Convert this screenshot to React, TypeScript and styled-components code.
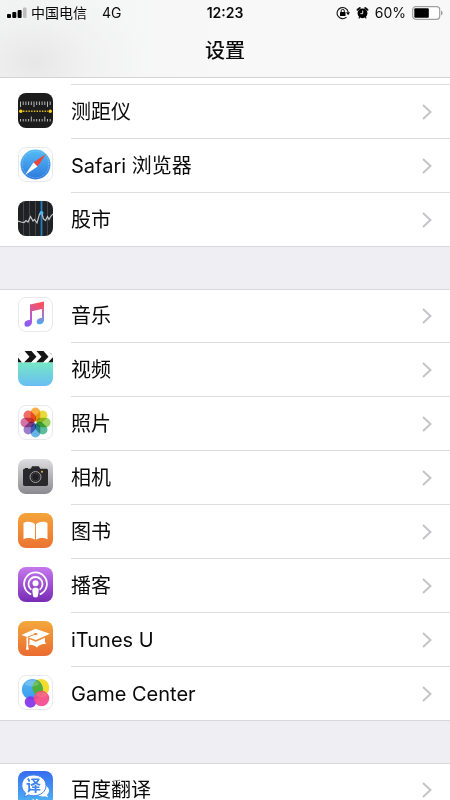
import React from "react";
import styled, { createGlobalStyle } from "styled-components";

const GlobalStyle = createGlobalStyle`
  *, *::before, *::after { box-sizing: border-box; }
  body {
    margin: 0;
    background: #efeef3;
    color: #0a0a0a;
    font-family: Inter, "Noto Sans CJK SC", sans-serif;
  }
`;

const Screen = styled.div`
  display: flex;
  flex-direction: column;
  height: 100vh;
  overflow: hidden;
`;

const Header = styled.header`
  flex: none;
  border-bottom: 1px solid #d3d3d5;
  background:
    radial-gradient(ellipse 110px 80px at 35px 62px, #e7e7e7, rgba(238, 238, 238, 0.5) 50%, rgba(244, 244, 244, 0)),
    linear-gradient(90deg, #f3f4f4, #f8f8f8 50%, #f8f8f8);
`;

const StatusBar = styled.div`
  display: grid;
  grid-template-columns: 1fr auto 1fr;
  align-items: center;
  height: 26px;
  padding: 0 7px;
  font-size: 14px;
  line-height: 20px;
`;

const StatusSide = styled.div<{ $end?: boolean }>`
  display: flex;
  align-items: center;
  justify-content: ${(p) => (p.$end ? "flex-end" : "flex-start")};
  gap: ${(p) => (p.$end ? "6px" : "4px")};
  white-space: nowrap;
`;

const Network = styled.span`
  margin-left: 11px;
`;

const Clock = styled.time`
  font-weight: 600;
`;

const Title = styled.h1`
  margin: 0;
  height: 51px;
  font-size: 20px;
  font-weight: 500;
  line-height: 51px;
  text-align: center;
`;

const Content = styled.main`
  flex: 1;
  min-height: 0;
  overflow-y: auto;
  scrollbar-width: none;
`;

const HiddenRowEdge = styled.div`
  height: 7px;
  padding-left: 71px;
  background: #fff;

  &::after {
    content: "";
    display: block;
    height: 100%;
    border-bottom: 1px solid #dedee0;
  }
`;

const Group = styled.ul<{ $continued?: boolean }>`
  margin: 0 0 42px;
  padding: 0;
  list-style: none;
  background: #fff;
  box-shadow: ${(p) => (p.$continued ? "" : "inset 0 1px #d9d9dc, ")}inset 0 -1px #d9d9dc;
`;

const RowLink = styled.a`
  display: flex;
  align-items: flex-start;
  gap: 18px;
  height: 54px;
  padding-left: 18px;
  color: inherit;
  text-decoration: none;
`;

const AppIcon = styled.svg`
  flex: none;
  width: 35px;
  height: 35px;
  margin-top: 8px;
`;

const RowBody = styled.span`
  display: flex;
  flex: 1;
  align-items: center;
  justify-content: space-between;
  height: 54px;
  padding-right: 17px;
  border-bottom: 1px solid #dedee0;

  li:last-child & {
    border-bottom-color: transparent;
  }
`;

const Label = styled.span`
  font-size: 20px;
  line-height: 28px;
`;

const Petal = styled.rect`
  mix-blend-mode: multiply;
`;

function Chevron() {
  return (
    <svg width="12" height="18" viewBox="0 0 12 18" fill="none" stroke="#c5c5c9" strokeWidth="2" aria-hidden="true">
      <path d="M2 2l7.5 7L2 16" />
    </svg>
  );
}

const plate = { x: 0.5, y: 0.5, width: 34, height: 34, rx: 7.5 };

function Measure() {
  const ticks = Array.from({ length: 12 }, (_, i) => i);
  return (
    <AppIcon viewBox="0 0 35 35" aria-hidden="true">
      <rect width="35" height="35" rx="8" fill="#1c1c1c" />
      <g stroke="#b9b9b9" strokeWidth="1">
        {ticks.map((i) => (
          <path
            key={i}
            d={`M${2.5 + i * 2.7} 8.500v${i % 5 === 0 ? 5.5 : 3.5}M${2.5 + i * 2.7} 28.500v-${i % 5 === 4 ? 5 : 2.5}`}
          />
        ))}
      </g>
      <path d="M5 18.300h25" stroke="#d9b41f" strokeWidth="1.400" strokeDasharray="1.500 1.200" />
      <circle cx="2.800" cy="18.300" r="1.700" fill="#ffd11f" />
      <circle cx="32.200" cy="18.300" r="1.700" fill="#ffd11f" />
    </AppIcon>
  );
}

function Safari() {
  return (
    <AppIcon viewBox="0 0 35 35" aria-hidden="true">
      <defs>
        <linearGradient id="safari" x2="0" y2="1">
          <stop stopColor="#56bdf5" />
          <stop offset="1" stopColor="#2d78dc" />
        </linearGradient>
      </defs>
      <rect {...plate} fill="#fff" stroke="#e9e9ed" />
      <circle cx="17.500" cy="17.500" r="15" fill="url(#safari)" />
      <circle cx="17.500" cy="17.500" r="13.300" fill="none" stroke="#a6d9fa" strokeWidth="1" strokeDasharray="0.500 1.200" />
      <path d="M28 7L19.500 19.500 15.500 15.500z" fill="#f04438" />
      <path d="M7 28l8.500-12.500 4 4z" fill="#fff" />
    </AppIcon>
  );
}

function Stocks() {
  return (
    <AppIcon viewBox="0 0 35 35" aria-hidden="true">
      <rect width="35" height="35" rx="8" fill="#202124" />
      <path d="M5.500 1v33M11.500 0v35M17.500 0v35M29.500 1v33" stroke="#44464a" />
      <path d="M23.500 0v35" stroke="#2281bd" strokeWidth="1.800" />
      <path
        d="M0 20l3 1 3 .5 2-2 2 1.500 2.500-5.500L15 20l1.500-1.500L19 22l2.500-9 2-1.500L25.500 18l2 1.500 2-4 1.500 3 2-3.500 2-2"
        fill="none"
        stroke="#c4c6c9"
        strokeWidth="1.200"
      />
      <circle cx="23.500" cy="12" r="2" fill="#4cb7f6" />
    </AppIcon>
  );
}

function Music() {
  return (
    <AppIcon viewBox="0 0 35 35" aria-hidden="true">
      <defs>
        <linearGradient id="music" x1="0" y1="1" x2="0.500" y2="0">
          <stop stopColor="#7a5cff" />
          <stop offset=".4" stopColor="#b05cd8" />
          <stop offset="1" stopColor="#f85261" />
        </linearGradient>
        <linearGradient id="musicStem" x2="0" y2="1">
          <stop stopColor="#ee596b" />
          <stop offset=".5" stopColor="#a777cb" />
          <stop offset="1" stopColor="#45aff4" />
        </linearGradient>
      </defs>
      <rect {...plate} fill="#fff" stroke="#e9e9ed" />
      <path d="M12 7.500L26 4.500v7l-12 2.700V25c0 3-2.500 4.700-4.900 4.700S6.500 28 6.500 26.500c0-2.300 2.200-3.300 5.500-3.700z" fill="url(#music)" />
      <path d="M24 9l2-.5V23c0 2.700-2.300 4.300-4.500 4.300s-2.800-1.500-2.800-2.900c0-2.200 2-3.200 5.300-3.600z" fill="url(#musicStem)" />
    </AppIcon>
  );
}

function Videos() {
  return (
    <AppIcon viewBox="0 0 35 35" aria-hidden="true">
      <defs>
        <linearGradient id="videos" x2="0" y2="1">
          <stop stopColor="#76e8c6" />
          <stop offset="1" stopColor="#68bdf4" />
        </linearGradient>
        <clipPath id="videoShape"><rect width="35" height="35" rx="8" /></clipPath>
      </defs>
      <g clipPath="url(#videoShape)">
        <rect width="35" height="12" fill="#fff" />
        <path d="M0 0h3.500L0 5zM0 6.500l4 5H0zM6.500 0h7l5 5.700-5.500 5.800H6l5.500-5.800zM18.500 0h7l5 5.700-5.500 5.800h-7l5.500-5.800zM30.500 0H35v5zM35 6v5.500h-5z" fill="#161616" />
        <rect y="11.500" width="35" height="23.500" fill="url(#videos)" />
      </g>
    </AppIcon>
  );
}

function Photos() {
  const colors = ["#f6a020", "#e7d51b", "#8acb42", "#40b18a", "#4aa4df", "#8b67c2", "#ca5c98", "#ed5548"];
  return (
    <AppIcon viewBox="0 0 35 35" aria-hidden="true">
      <rect {...plate} fill="#fff" stroke="#e9e9ed" />
      {colors.map((color, i) => (
        <Petal
          key={color}
          x="12.700"
          y="2.500"
          width="9.600"
          height="14"
          rx="4.800"
          fill={color}
          opacity="0.850"
          transform={`rotate(${i * 45} 17.500 17.500)`}
        />
      ))}
    </AppIcon>
  );
}

function Camera() {
  return (
    <AppIcon viewBox="0 0 35 35" aria-hidden="true">
      <defs>
        <linearGradient id="camera" x2="0" y2="1">
          <stop stopColor="#dedee0" />
          <stop offset="1" stopColor="#8a898f" />
        </linearGradient>
      </defs>
      <rect width="35" height="35" rx="8" fill="url(#camera)" />
      <path d="M7 9.700V9h3v.7h2.700l1.500-2.400h6.600l1.500 2.400h6c1 0 1.700.7 1.700 1.600v13.900c0 1-.7 1.700-1.700 1.700H6.700c-1 0-1.700-.7-1.700-1.700V11.300c0-.9.7-1.600 1.700-1.600z" fill="#29292c" />
      <circle cx="17.500" cy="18" r="5.500" fill="none" stroke="#9c9ca2" strokeWidth="1" />
      <circle cx="17.500" cy="18" r="3.800" fill="#202023" stroke="#3c3c41" />
      <circle cx="24" cy="12.800" r="1" fill="#f4b632" />
    </AppIcon>
  );
}

function Books() {
  return (
    <AppIcon viewBox="0 0 35 35" aria-hidden="true">
      <defs>
        <linearGradient id="books" x2="0" y2="1">
          <stop stopColor="#f4a43a" />
          <stop offset="1" stopColor="#ec7332" />
        </linearGradient>
      </defs>
      <rect width="35" height="35" rx="8" fill="url(#books)" />
      <path d="M17 11.300C15 8.500 8.500 7.900 5.500 10v16.200c3.300-1.700 9-1.500 11.500.6zM18 11.300c2-2.800 8.500-3.400 11.500-1.300v16.200c-3.300-1.700-9-1.500-11.500.6z" fill="#fff" />
    </AppIcon>
  );
}

function Podcasts() {
  return (
    <AppIcon viewBox="0 0 35 35" aria-hidden="true">
      <defs>
        <linearGradient id="podcasts" x2="0" y2="1">
          <stop stopColor="#c678ee" />
          <stop offset="1" stopColor="#772bb6" />
        </linearGradient>
      </defs>
      <rect width="35" height="35" rx="8" fill="url(#podcasts)" />
      <g fill="none" stroke="#fff" strokeWidth="1.800" strokeLinecap="round">
        <path d="M12.500 27.100a11.400 11.400 0 1 1 10 0" />
        <path d="M12.800 22.200a7 7 0 1 1 9.400 0" />
      </g>
      <circle cx="17.500" cy="16.200" r="3" fill="#fff" />
      <path d="M14.300 22.500c0-2.500 6.400-2.500 6.400 0 0 2-.5 5.500-1 7-.4 1.200-4 1.200-4.400 0-.5-1.500-1-5-1-7z" fill="#fff" />
    </AppIcon>
  );
}

function ITunesU() {
  return (
    <AppIcon viewBox="0 0 35 35" aria-hidden="true">
      <defs>
        <linearGradient id="itunes" x2="0" y2="1">
          <stop stopColor="#f3a83c" />
          <stop offset="1" stopColor="#ea6b31" />
        </linearGradient>
      </defs>
      <rect width="35" height="35" rx="8" fill="url(#itunes)" />
      <path d="M3.300 14L17.500 7.800 32 12.700 18 19z" fill="#fff" />
      <path d="M11.500 18.300l6.500 2.400 9-4v4.500l1.500 1.500c-3.500-.3-7 .7-9.500 3.800-2.300-2-5.500-3-8.500-2.500l1-1.500z" fill="#fff" />
      <path d="M17.500 13l-7.500 3" fill="none" stroke="#ef8735" strokeWidth="1" />
      <ellipse cx="17.700" cy="13" rx="2" ry="1" fill="#ef8735" />
      <path d="M8.500 16.500h1.600v7.500l.7 4.500c-1.200.5-2.200.2-2.800 0l.5-4.500z" fill="#fff" />
    </AppIcon>
  );
}

function GameCenter() {
  return (
    <AppIcon viewBox="0 0 35 35" aria-hidden="true">
      <defs>
        <linearGradient id="gameBlue" x2="0" y2="1">
          <stop stopColor="#58b4ea" />
          <stop offset="1" stopColor="#359df5" />
        </linearGradient>
        <linearGradient id="gamePink" x2="0" y2="1">
          <stop stopColor="#f5506a" />
          <stop offset="1" stopColor="#f4459c" />
        </linearGradient>
        <clipPath id="gameBlueShape"><circle cx="14.500" cy="14.500" r="10.600" /></clipPath>
      </defs>
      <rect {...plate} fill="#fff" stroke="#e9e9ed" />
      <circle cx="22.800" cy="12.500" r="8.500" fill="#f3dc2c" />
      <circle cx="14.500" cy="14.500" r="10.600" fill="url(#gameBlue)" />
      <circle cx="22.800" cy="12.500" r="8.500" fill="#4fae3e" clipPath="url(#gameBlueShape)" />
      <ellipse cx="14" cy="8.500" rx="7" ry="3" fill="#fff" opacity="0.200" />
      <circle cx="12.500" cy="27" r="5.800" fill="#8134ea" opacity="0.920" />
      <circle cx="23.500" cy="23.500" r="7.800" fill="url(#gamePink)" opacity="0.920" />
      <ellipse cx="23.500" cy="19.500" rx="5.500" ry="2.500" fill="#fff" opacity="0.120" />
    </AppIcon>
  );
}

function Translate() {
  return (
    <AppIcon viewBox="0 0 35 35" aria-hidden="true">
      <defs>
        <linearGradient id="translate" x2="0" y2="1">
          <stop stopColor="#366cee" />
          <stop offset="1" stopColor="#50baf5" />
        </linearGradient>
      </defs>
      <rect width="35" height="35" rx="8" fill="url(#translate)" />
      <path d="M27 14c5 3 5 7 2 9.700l1 2.600-3-1c-3 .7-6 0-8-2z" fill="#fff" />
      <path d="M15.500 4c7 0 12.500 4.500 12.500 10.400s-5 10.400-12.500 10.400c-2 0-3.400-.3-4.900-.9L6.500 26l1-4.200c-2.300-1.800-3.700-4.300-3.700-7.400C3.800 8.500 8.500 4 15.500 4z" fill="#fff" stroke="#3f83ee" strokeWidth="1" />
      <text x="15.500" y="20" textAnchor="middle" fontSize="15" fontWeight="700" fill="#4186ed">译</text>
      <path d="M14.500 29h1.500M18 28.500l2 1" stroke="#fff" strokeWidth="1.500" />
    </AppIcon>
  );
}

function Signal() {
  return (
    <svg width="20" height="12" viewBox="0 0 20 12" aria-label="信号">
      <rect x="0" y="7" width="4" height="4" rx="1" />
      <rect x="5.300" y="5" width="4" height="6" rx="1" />
      <rect x="10.600" y="3" width="4" height="8" rx="1" />
      <rect x="16" y="0.500" width="3.500" height="10.500" rx="1" fill="#bcbcbc" />
    </svg>
  );
}

function RotationLock() {
  return (
    <svg width="14" height="14" viewBox="0 0 14 14" aria-label="竖排方向锁定">
      <path d="M10.500 11.200A5.600 5.600 0 1 1 12.200 6" fill="none" stroke="#111" strokeWidth="1.100" />
      <path d="M10 6.200h4l-1.900 3z" />
      <rect x="4" y="6" width="5.500" height="4" rx=".5" />
      <path d="M5.200 6V4.900a1.550 1.550 0 0 1 3.100 0V6" fill="none" stroke="#111" />
    </svg>
  );
}

function Alarm() {
  return (
    <svg width="13" height="14" viewBox="0 0 13 14" aria-label="闹钟">
      <circle cx="6.500" cy="7.300" r="4.900" />
      <path d="M1.500 3.800l2.300-1.900M11.500 3.800L9.200 1.900" stroke="#111" strokeWidth="1.900" strokeLinecap="round" />
      <path d="M3.700 11.200l-.9 1.200M9.300 11.200l.9 1.200" stroke="#111" strokeWidth="1.200" />
      <path d="M6.700 4.500v3.200H4.400" stroke="#fff" strokeWidth="0.900" fill="none" />
    </svg>
  );
}

function Battery() {
  return (
    <svg width="31" height="14" viewBox="0 0 31 14" aria-label="电池">
      <rect x="0.700" y="0.700" width="27" height="12.600" rx="3" fill="#fff" stroke="#a0a0a0" strokeWidth="1.200" />
      <rect x="2.300" y="2.300" width="14.500" height="9.400" rx="1" />
      <path d="M29 4.700c2.200.6 2.200 4 0 4.600z" fill="#a0a0a0" />
    </svg>
  );
}

interface Entry {
  label: string;
  Icon: () => React.JSX.Element;
}

const tools: Entry[] = [
  { label: "测距仪", Icon: Measure },
  { label: "Safari 浏览器", Icon: Safari },
  { label: "股市", Icon: Stocks },
];

const media: Entry[] = [
  { label: "音乐", Icon: Music },
  { label: "视频", Icon: Videos },
  { label: "照片", Icon: Photos },
  { label: "相机", Icon: Camera },
  { label: "图书", Icon: Books },
  { label: "播客", Icon: Podcasts },
  { label: "iTunes U", Icon: ITunesU },
  { label: "Game Center", Icon: GameCenter },
];

const thirdParty: Entry[] = [{ label: "百度翻译", Icon: Translate }];

function SettingsGroup({ entries, continued }: { entries: Entry[]; continued?: boolean }) {
  return (
    <Group $continued={continued}>
      {entries.map(({ label, Icon }) => (
        <li key={label}>
          <RowLink href="#">
            <Icon />
            <RowBody>
              <Label>{label}</Label>
              <Chevron />
            </RowBody>
          </RowLink>
        </li>
      ))}
    </Group>
  );
}

export default function App() {
  return (
    <Screen>
      <GlobalStyle />
      <Header>
        <StatusBar>
          <StatusSide>
            <Signal />
            <span>中国电信</span>
            <Network>4G</Network>
          </StatusSide>
          <Clock>12:23</Clock>
          <StatusSide $end>
            <RotationLock />
            <Alarm />
            <span>60%</span>
            <Battery />
          </StatusSide>
        </StatusBar>
        <Title>设置</Title>
      </Header>
      <Content>
        <HiddenRowEdge />
        <SettingsGroup entries={tools} continued />
        <SettingsGroup entries={media} />
        <SettingsGroup entries={thirdParty} />
      </Content>
    </Screen>
  );
}
